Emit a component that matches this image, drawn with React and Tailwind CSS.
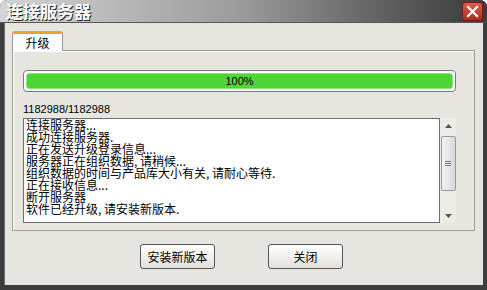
export default function App() {
  const lines = [
    "连接服务器...",
    "成功连接服务器.",
    "正在发送升级登录信息...",
    "服务器正在组织数据, 请稍候...",
    "组织数据的时间与产品库大小有关, 请耐心等待.",
    "正在接收信息...",
    "断开服务器",
    "软件已经升级, 请安装新版本.",
  ];
  const cjk = { fontFamily: '"Noto Sans CJK SC", "Liberation Sans", sans-serif' };
  const lat = { fontFamily: '"Liberation Sans", Arial, sans-serif' };
  return (
    <div className="w-[487px] h-[290px] bg-[#3d3d3d] flex flex-col rounded-t-[7px] overflow-hidden" style={cjk}>
      <div className="h-[23px] shrink-0 bg-gradient-to-r from-[#d4d4d4] via-[#9a9a9a] to-[#3a3a3a] flex items-center justify-between pl-[6px] pr-[4px] border-b border-[#555]">
        <span className="text-white font-bold text-[17px] leading-[22px] [text-shadow:1px_1px_0_#222]">连接服务器</span>
        <div className="w-[21px] h-[19px] rounded-[3px] bg-gradient-to-b from-[#e05a48] to-[#b42a1e] border border-[#7a1a12] flex items-center justify-center">
          <svg width="13" height="13" viewBox="0 0 13 13">
            <path d="M2 2 L11 11 M11 2 L2 11" stroke="white" strokeWidth="2.2" strokeLinecap="square" />
          </svg>
        </div>
      </div>
      <div className="flex-1 mx-[4px] mb-[5px] bg-[#e7e5e0] border-l border-[#6a6a6a] flex flex-col pl-[7px] pt-[8px]">
        <div className="flex">
          <div className="w-[51px] h-[20px] bg-[#fcfcfc] border-t-[3px] border-[#f0a030] border-x border-x-[#919b9c] rounded-t-[3px] flex items-center justify-center text-[12px] leading-[14px] text-black relative z-10 -mb-px">
            升级
          </div>
        </div>
        <div className="w-[463px] h-[181px] border border-[#a29f92] border-t-[#9c998c] shadow-[inset_1px_1px_0_#fff] flex flex-col pl-[10px] pt-[19px]">
          <div className="w-[433px] h-[22px] rounded-[4px] border border-[#7a7a7a] bg-white p-[2px] relative">
            <div className="w-full h-full rounded-[3px] bg-[#4fd535] border border-[#90e47c]"></div>
            <div className="absolute inset-0 flex items-center justify-center text-[11px] text-black" style={lat}>100%</div>
          </div>
          <div className="mt-[10px] text-[11px] leading-[14px] text-black" style={lat}>1182988/1182988</div>
          <div className="mt-[2px] w-[433px] h-[105px] flex">
            <div className="w-[417px] h-full bg-white border border-[#6e6e6e] pl-[2px] pt-0 overflow-hidden">
              {lines.map((l, i) => (
                <div key={i} className="text-[12px] leading-[12px] text-black whitespace-nowrap">{l}</div>
              ))}
            </div>
            <div className="w-[16px] h-full bg-[#ecebe6] flex flex-col items-center">
              <div className="h-[15px] flex items-center justify-center">
                <svg width="7" height="4" viewBox="0 0 7 4"><path d="M3.5 0 L7 4 L0 4 Z" fill="#555" /></svg>
              </div>
              <div className="w-[15px] h-[55px] mt-[3px] rounded-[2px] border border-[#9a9a9a] bg-gradient-to-r from-[#f4f4f4] to-[#d8d8d8] flex items-center justify-center">
                <svg width="6" height="6" viewBox="0 0 6 6"><path d="M0 0.5 H6 M0 2.5 H6 M0 4.5 H6" stroke="#777" strokeWidth="1" /></svg>
              </div>
              <div className="flex-1"></div>
              <div className="h-[15px] flex items-center justify-center">
                <svg width="7" height="4" viewBox="0 0 7 4"><path d="M0 0 L7 0 L3.5 4 Z" fill="#555" /></svg>
              </div>
            </div>
          </div>
        </div>
        <div className="flex pl-[128px] pt-[13px] gap-[53px]">
          <button className="w-[75px] h-[25px] rounded-[3px] border border-[#555] bg-gradient-to-b from-white to-[#e2e0da] text-[12px] text-black">安装新版本</button>
          <button className="w-[75px] h-[25px] rounded-[3px] border border-[#555] bg-gradient-to-b from-white to-[#e2e0da] text-[12px] text-black">关闭</button>
        </div>
      </div>
    </div>
  );
}
